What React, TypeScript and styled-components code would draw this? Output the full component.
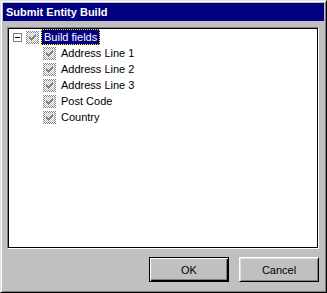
import React from 'react'
import styled, { createGlobalStyle } from 'styled-components'

const GlobalStyle = createGlobalStyle`
  html, body {
    margin: 0;
    padding: 0;
    background: #c0c0c0;
  }
  body {
    font-family: "Liberation Sans", Arial, sans-serif;
    font-size: 11px;
  }
`

const Window = styled.div`
  box-sizing: border-box;
  width: 327px;
  height: 293px;
  display: flex;
  flex-direction: column;
  background: #c0c0c0;
  border: 1px solid;
  border-color: #dfdfdf #000 #000 #dfdfdf;
  box-shadow: inset 1px 1px #fff, inset -1px -1px #808080;
  padding: 2px;
`

const TitleBar = styled.div`
  height: 18px;
  flex: none;
  display: flex;
  align-items: center;
  padding-left: 3px;
  background: #000080;
  color: #fff;
  font-weight: bold;
  font-size: 11px;
`

const Body = styled.div`
  flex: 1;
  display: flex;
  flex-direction: column;
  padding: 6px 5px 8px 4px;
`

const TreePanel = styled.div`
  flex: 1;
  background: #fff;
  border: 1px solid;
  border-color: #808080 #fff #fff #808080;
  box-shadow: inset 0 0 0 1px #000;
  padding: 1px;
`

const Row = styled.div<{ $level: number }>`
  height: 16px;
  display: flex;
  align-items: center;
  padding-left: ${({ $level }) => ($level ? 34 : 4)}px;
  color: #000;
`

const Expander = styled.div`
  box-sizing: border-box;
  width: 9px;
  height: 9px;
  margin-right: 4px;
  border: 1px solid #808080;
  background: #fff;
  display: flex;
  align-items: center;
  justify-content: center;
  &::after {
    content: '';
    width: 5px;
    height: 1px;
    background: #000;
  }
`

const Label = styled.span<{ $selected?: boolean }>`
  margin-left: 2px;
  padding: 0 2px;
  height: 14px;
  line-height: 14px;
  border: 1px dotted ${({ $selected }) => ($selected ? '#ffff00' : 'transparent')};
  background: ${({ $selected }) => ($selected ? '#000080' : 'transparent')};
  color: ${({ $selected }) => ($selected ? '#fff' : '#000')};
  white-space: nowrap;
`

const Buttons = styled.div`
  flex: none;
  display: flex;
  justify-content: flex-end;
  gap: 10px;
  margin-top: 8px;
`

const Button = styled.button<{ $default?: boolean }>`
  box-sizing: border-box;
  width: 80px;
  height: 25px;
  margin: 0;
  padding: 0;
  font-family: "Liberation Sans", Arial, sans-serif;
  font-size: 11px;
  color: #000;
  background: #c0c0c0;
  border: 1px solid;
  border-color: ${({ $default }) => ($default ? '#000' : '#fff #000 #000 #fff')};
  box-shadow: ${({ $default }) =>
    $default
      ? 'inset 1px 1px #fff, inset -1px -1px #000, inset -2px -2px #808080'
      : 'inset 1px 1px #dfdfdf, inset -1px -1px #808080'};
`

const CheckSvg = styled.svg`
  flex: none;
  display: block;
`

const checkCols: Array<[number, number]> = [
  [3, 5],
  [4, 6],
  [5, 7],
  [6, 6],
  [7, 5],
  [8, 4],
  [9, 3],
]

const GrayCheck = ({ id }: { id: string }) => (
  <CheckSvg width="13" height="13" viewBox="0 0 13 13" shapeRendering="crispEdges">
    <defs>
      <pattern id={`d-${id}`} width="2" height="2" patternUnits="userSpaceOnUse">
        <rect width="2" height="2" fill="#fff" />
        <rect width="1" height="1" fill="#808080" />
        <rect x="1" y="1" width="1" height="1" fill="#808080" />
      </pattern>
      <pattern id={`l-${id}`} width="2" height="2" patternUnits="userSpaceOnUse">
        <rect width="2" height="2" fill="#fff" />
        <rect width="1" height="1" fill="#c0c0c0" />
        <rect x="1" y="1" width="1" height="1" fill="#c0c0c0" />
      </pattern>
    </defs>
    <rect width="13" height="13" fill={`url(#d-${id})`} />
    <rect x="2" y="2" width="9" height="9" fill={`url(#l-${id})`} />
    {checkCols.map(([x, y]) => (
      <rect key={x} x={x} y={y} width="1" height="3" fill="#808080" />
    ))}
  </CheckSvg>
)

const fields = ['Address Line 1', 'Address Line 2', 'Address Line 3', 'Post Code', 'Country']

export default function App() {
  return (
    <>
      <GlobalStyle />
      <Window>
        <TitleBar>Submit Entity Build</TitleBar>
        <Body>
          <TreePanel>
            <Row $level={0}>
              <Expander />
              <GrayCheck id="root" />
              <Label $selected>Build fields</Label>
            </Row>
            {fields.map((f, i) => (
              <Row key={f} $level={1}>
                <GrayCheck id={`f${i}`} />
                <Label>{f}</Label>
              </Row>
            ))}
          </TreePanel>
          <Buttons>
            <Button $default>OK</Button>
            <Button>Cancel</Button>
          </Buttons>
        </Body>
      </Window>
    </>
  )
}
